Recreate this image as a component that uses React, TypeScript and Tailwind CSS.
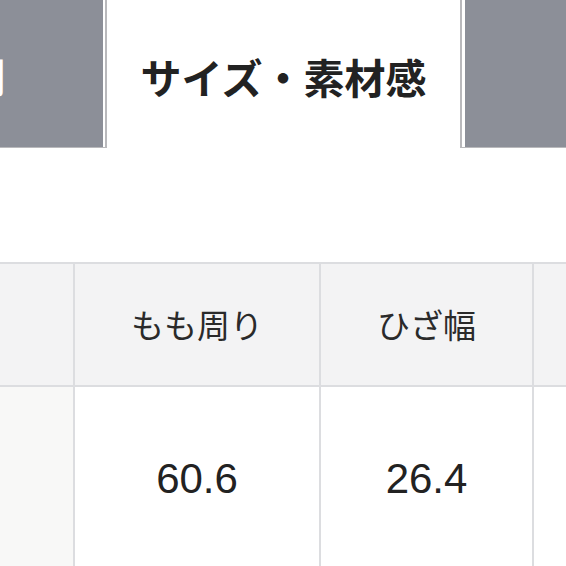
import React from "react";

const jp = { fontFamily: '"Noto Sans CJK JP", "Noto Sans", sans-serif' };
const num = { fontFamily: '"Liberation Sans", Arial, sans-serif' };

export default function App() {
  return (
    <div className="w-[566px] h-[566px] overflow-hidden bg-white" style={jp}>
      {/* ── Tabs ── */}
      <div className="flex h-[148px]">
        <div className="shrink-0 w-[358px] -ml-[251px] border-r-2 border-b border-[#b9b9bc]">
          <div className="h-full flex items-center justify-center pt-1 pr-[6px] bg-[#8c8f98] border-r-2 border-white">
            <span className="text-[41px] font-bold text-white leading-none">商品説明</span>
          </div>
        </div>

        <div className="shrink-0 w-[353px] flex items-center justify-center pt-1 bg-white">
          <span className="text-[41px] font-bold text-[#222222] leading-none">サイズ・素材感</span>
        </div>

        <div className="shrink-0 w-[360px] border-l-2 border-b border-[#b9b9bc]">
          <div className="h-full bg-[#8c8f98] border-l-[3px] border-white" />
        </div>
      </div>

      {/* ── Size table ── */}
      <div className="mt-[114px] border-t-2 border-[#dcdde0]">
        <div className="grid grid-cols-[75px_246px_213px_1fr]">
          <div className="h-[123px] bg-[#f3f3f4] border-r-2 border-b-2 border-[#dcdde0]" />
          <div className="h-[123px] bg-[#f3f3f4] border-r-2 border-b-2 border-[#dcdde0] flex items-center justify-center">
            <span className="text-[33px] text-[#2a2a2a]">もも周り</span>
          </div>
          <div className="h-[123px] bg-[#f3f3f4] border-r-2 border-b-2 border-[#dcdde0] flex items-center justify-center">
            <span className="text-[33px] text-[#2a2a2a]">ひざ幅</span>
          </div>
          <div className="h-[123px] bg-[#f3f3f4] border-b-2 border-[#dcdde0]" />

          <div className="h-[182px] bg-[#f8f8f7] border-r-2 border-[#dcdde0]" />
          <div className="h-[182px] bg-white border-r-2 border-[#dcdde0] flex items-center justify-center">
            <span className="text-[42px] text-[#222222]" style={num}>60.6</span>
          </div>
          <div className="h-[182px] bg-white border-r-2 border-[#dcdde0] flex items-center justify-center">
            <span className="text-[42px] text-[#222222]" style={num}>26.4</span>
          </div>
          <div className="h-[182px] bg-white" />
        </div>
      </div>
    </div>
  );
}
